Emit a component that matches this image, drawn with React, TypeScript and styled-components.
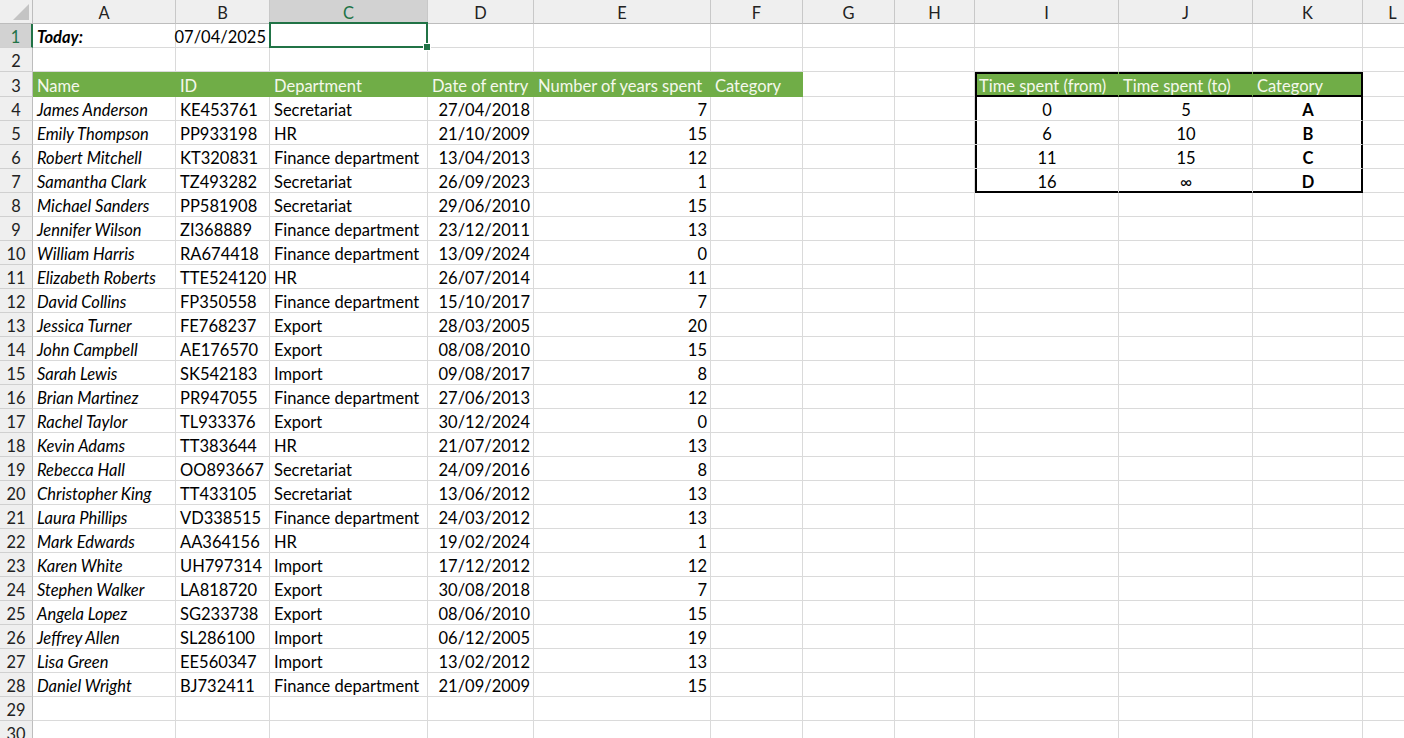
import React from "react";
import styled, { createGlobalStyle, css } from "styled-components";

const Global = createGlobalStyle`
  html, body { margin: 0; padding: 0; background: #fff; overflow: hidden; }
  body { font-family: "Lato", "Liberation Sans", sans-serif; }
`;

const COLS = [143, 94, 158, 106, 177, 92, 92, 80, 144, 134, 110, 60];
const LETTERS = ["A", "B", "C", "D", "E", "F", "G", "H", "I", "J", "K", "L"];
const TEMPLATE = `33px ${COLS.map((c) => c + "px").join(" ")}`;

const GRID = "#dadada";
const GREEN = "#70ad47";
const XL_GREEN = "#217346";

const Sheet = styled.div`
  width: 1404px;
  height: 738px;
  overflow: hidden;
  font-size: 16.5px;
  color: #000;
`;

const Row = styled.div<{ $h?: number }>`
  display: grid;
  grid-template-columns: ${TEMPLATE};
  height: ${(p) => p.$h ?? 24}px;
`;

const Corner = styled.div`
  position: relative;
  background: #efefef;
  border-right: 1px solid #bdbdbd;
  border-bottom: 1px solid #bdbdbd;
  box-sizing: border-box;
  &::after {
    content: "";
    position: absolute;
    right: 3px;
    bottom: 3px;
    width: 0;
    height: 0;
    border-left: 16px solid transparent;
    border-bottom: 16px solid #c4c4c4;
  }
`;

const ColHead = styled.div<{ $sel?: boolean }>`
  box-sizing: border-box;
  display: flex;
  align-items: center;
  justify-content: center;
  background: ${(p) => (p.$sel ? "#d2d2d2" : "#efefef")};
  color: ${(p) => (p.$sel ? XL_GREEN : "#222")};
  border-right: 1px solid #c8c8c8;
  border-bottom: 1px solid ${(p) => (p.$sel ? XL_GREEN : "#bdbdbd")};
  font-size: 16.4px;
  padding-top: 1px;
`;

const RowHead = styled.div<{ $sel?: boolean }>`
  box-sizing: border-box;
  display: flex;
  align-items: center;
  justify-content: center;
  background: ${(p) => (p.$sel ? "#d2d2d2" : "#efefef")};
  color: ${(p) => (p.$sel ? XL_GREEN : "#222")};
  border-right: ${(p) => (p.$sel ? `2px solid ${XL_GREEN}` : "1px solid #bdbdbd")};
  border-bottom: 1px solid #d0d0d0;
  font-size: 16.4px;
  padding-top: 2px;
`;

type Edge = { l?: boolean; r?: boolean; t?: boolean; b?: boolean };

const edgeCss = (e?: Edge) => {
  if (!e) return "";
  const shadows: string[] = [];
  if (e.l) shadows.push("inset 2px 0 0 #000");
  if (e.t) shadows.push("inset 0 2px 0 #000");
  if (e.r) shadows.push("inset -1px 0 0 #000");
  if (e.b) shadows.push("inset 0 -1px 0 #000");
  return css`
    box-shadow: ${shadows.join(", ")};
    ${e.r ? "border-right-color: #000;" : ""}
    ${e.b ? "border-bottom-color: #000;" : ""}
  `;
};

const Cell = styled.div<{
  $align?: "left" | "right" | "center";
  $bold?: boolean;
  $italic?: boolean;
  $fill?: string;
  $ink?: string;
  $edge?: Edge;
  $selected?: boolean;
}>`
  position: relative;
  box-sizing: border-box;
  display: flex;
  align-items: center;
  justify-content: ${(p) =>
    p.$align === "right" ? "flex-end" : p.$align === "center" ? "center" : "flex-start"};
  padding: 3px 3px 0 4px;
  white-space: nowrap;
  overflow: visible;
  background: ${(p) => p.$fill ?? "#fff"};
  color: ${(p) => p.$ink ?? "#000"};
  font-weight: ${(p) => (p.$bold ? 700 : 400)};
  font-style: ${(p) => (p.$italic ? "italic" : "normal")};
  border-right: 1px solid ${(p) => p.$fill ?? GRID};
  border-bottom: 1px solid ${(p) => p.$fill ?? GRID};
  ${(p) => edgeCss(p.$edge)}
  ${(p) =>
    p.$selected &&
    css`
      &::after {
        content: "";
        position: absolute;
        top: -2px;
        left: -1px;
        right: -1px;
        bottom: -1px;
        border: 2px solid ${XL_GREEN};
        pointer-events: none;
      }
      &::before {
        content: "";
        position: absolute;
        right: -4px;
        bottom: -4px;
        width: 6px;
        height: 6px;
        background: ${XL_GREEN};
        border: 1px solid #fff;
        z-index: 2;
      }
    `}
`;

type CellSpec = {
  text?: string;
  align?: "left" | "right" | "center";
  bold?: boolean;
  italic?: boolean;
  fill?: string;
  ink?: string;
  edge?: Edge;
  selected?: boolean;
};

const people: [string, string, string, string, number][] = [
  ["James Anderson", "KE453761", "Secretariat", "27/04/2018", 7],
  ["Emily Thompson", "PP933198", "HR", "21/10/2009", 15],
  ["Robert Mitchell", "KT320831", "Finance department", "13/04/2013", 12],
  ["Samantha Clark", "TZ493282", "Secretariat", "26/09/2023", 1],
  ["Michael Sanders", "PP581908", "Secretariat", "29/06/2010", 15],
  ["Jennifer Wilson", "ZI368889", "Finance department", "23/12/2011", 13],
  ["William Harris", "RA674418", "Finance department", "13/09/2024", 0],
  ["Elizabeth Roberts", "TTE524120", "HR", "26/07/2014", 11],
  ["David Collins", "FP350558", "Finance department", "15/10/2017", 7],
  ["Jessica Turner", "FE768237", "Export", "28/03/2005", 20],
  ["John Campbell", "AE176570", "Export", "08/08/2010", 15],
  ["Sarah Lewis", "SK542183", "Import", "09/08/2017", 8],
  ["Brian Martinez", "PR947055", "Finance department", "27/06/2013", 12],
  ["Rachel Taylor", "TL933376", "Export", "30/12/2024", 0],
  ["Kevin Adams", "TT383644", "HR", "21/07/2012", 13],
  ["Rebecca Hall", "OO893667", "Secretariat", "24/09/2016", 8],
  ["Christopher King", "TT433105", "Secretariat", "13/06/2012", 13],
  ["Laura Phillips", "VD338515", "Finance department", "24/03/2012", 13],
  ["Mark Edwards", "AA364156", "HR", "19/02/2024", 1],
  ["Karen White", "UH797314", "Import", "17/12/2012", 12],
  ["Stephen Walker", "LA818720", "Export", "30/08/2018", 7],
  ["Angela Lopez", "SG233738", "Export", "08/06/2010", 15],
  ["Jeffrey Allen", "SL286100", "Import", "06/12/2005", 19],
  ["Lisa Green", "EE560347", "Import", "13/02/2012", 13],
  ["Daniel Wright", "BJ732411", "Finance department", "21/09/2009", 15],
];

const lookup: [string, string, string][] = [
  ["0", "5", "A"],
  ["6", "10", "B"],
  ["11", "15", "C"],
  ["16", "∞", "D"],
];

const blank = (): CellSpec[] => LETTERS.map(() => ({}));

function buildRows(): { h: number; cells: CellSpec[] }[] {
  const rows: { h: number; cells: CellSpec[] }[] = [];

  const r1 = blank();
  r1[0] = { text: "Today:", bold: true, italic: true };
  r1[1] = { text: "07/04/2025", align: "right" };
  r1[2] = { selected: true };
  rows.push({ h: 24, cells: r1 });

  rows.push({ h: 24, cells: blank() });

  const r3 = blank();
  const heads = ["Name", "ID", "Department", "Date of entry", "Number of years spent", "Category"];
  heads.forEach((t, i) => (r3[i] = { text: t, fill: GREEN, ink: "#f5f8ec" }));
  r3[8] = { text: "Time spent (from)", fill: GREEN, ink: "#f5f8ec", edge: { l: true, t: true, b: true } };
  r3[9] = { text: "Time spent (to)", fill: GREEN, ink: "#f5f8ec", edge: { t: true, b: true } };
  r3[10] = { text: "Category", fill: GREEN, ink: "#f5f8ec", edge: { t: true, b: true, r: true } };
  rows.push({ h: 25, cells: r3 });

  people.forEach((p, idx) => {
    const c = blank();
    c[0] = { text: p[0], italic: true };
    c[1] = { text: p[1] };
    c[2] = { text: p[2] };
    c[3] = { text: p[3], align: "right" };
    c[4] = { text: String(p[4]), align: "right" };
    if (idx < lookup.length) {
      const last = idx === lookup.length - 1;
      c[8] = { text: lookup[idx][0], align: "center", edge: { l: true, b: last } };
      c[9] = { text: lookup[idx][1], align: "center", edge: { b: last } };
      c[10] = { text: lookup[idx][2], align: "center", bold: true, edge: { r: true, b: last } };
    }
    rows.push({ h: 24, cells: c });
  });

  rows.push({ h: 24, cells: blank() });
  rows.push({ h: 24, cells: blank() });
  return rows;
}

export default function App() {
  const rows = buildRows();
  return (
    <>
      <Global />
      <Sheet>
        <Row $h={24}>
          <Corner />
          {LETTERS.map((l) => (
            <ColHead key={l} $sel={l === "C"}>
              {l}
            </ColHead>
          ))}
        </Row>
        {rows.map((r, i) => (
          <Row key={i} $h={r.h}>
            <RowHead $sel={i === 0}>{i + 1}</RowHead>
            {r.cells.map((c, j) => (
              <Cell
                key={j}
                $align={c.align}
                $bold={c.bold}
                $italic={c.italic}
                $fill={c.fill}
                $ink={c.ink}
                $edge={c.edge}
                $selected={c.selected}
              >
                {c.text}
              </Cell>
            ))}
          </Row>
        ))}
      </Sheet>
    </>
  );
}
